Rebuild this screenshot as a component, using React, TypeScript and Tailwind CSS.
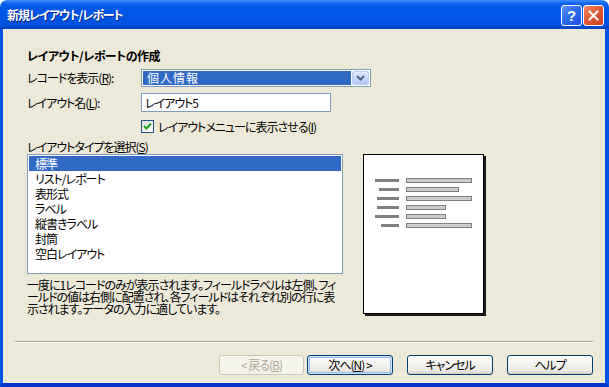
import React from "react";

const U = ({ c }: { c: string }) => <span className="underline">{c}</span>;

function XpButton({
  children,
  disabled = false,
  def = false,
}: {
  children: React.ReactNode;
  disabled?: boolean;
  def?: boolean;
}) {
  if (disabled) {
    return (
      <div className="h-[20px] w-[85px] rounded-[3px] border border-[#c9c7ba] bg-[#f5f4ea] flex items-center justify-center text-[#aca899] text-[12px] leading-none">
        {children}
      </div>
    );
  }
  return (
    <div
      className={
        "h-[20px] w-[86px] rounded-[3px] border border-[#003c74] bg-[linear-gradient(to_bottom,#ffffff_0%,#f3f3ef_40%,#ecebe6_80%,#d6d0c5_100%)] flex items-center justify-center text-black text-[12px] leading-none " +
        (def ? "shadow-[inset_0_0_0_1px_#cee7ff,inset_0_0_0_2px_#98b8ea]" : "")
      }
    >
      {children}
    </div>
  );
}

export default function App() {
  const items = ["標準", "リスト/レポート", "表形式", "ラベル", "縦書きラベル", "封筒", "空白レイアウト"];
  const bars = [
    { dx: 12, dw: 24, lw: 66 },
    { dx: 16, dw: 20, lw: 53 },
    { dx: 14, dw: 22, lw: 66 },
    { dx: 14, dw: 22, lw: 40 },
    { dx: 12, dw: 24, lw: 40 },
    { dx: 18, dw: 18, lw: 66 },
  ];
  return (
    <div className="w-[609px] h-[387px] bg-white flex flex-col overflow-hidden [font-family:'Noto_Sans_CJK_JP','Noto_Sans',sans-serif] [font-feature-settings:'palt'] text-black">
      {/* title bar */}
      <div className="h-[29px] shrink-0 rounded-t-[7px] bg-[linear-gradient(to_bottom,#3d8ef9_0%,#1263f0_12%,#0058ea_25%,#0055e5_60%,#0051dd_85%,#0040c0_100%)] flex items-center pl-[7px] pr-[5px]">
        <span className="text-white font-bold text-[12px] leading-none tracking-[-1px] [text-shadow:1px_1px_0_#0a2a8a]">
          新規レイアウト/レポート
        </span>
        <div className="ml-auto flex gap-[1px] mt-[1px]">
          <div className="w-[21px] h-[21px] rounded-[3px] border border-white bg-[linear-gradient(135deg,#5a93ff_0%,#2c6df0_45%,#1c52dc_100%)] flex items-center justify-center text-white font-bold text-[15px] leading-none [font-family:'Liberation_Sans',sans-serif]">
            ?
          </div>
          <div className="w-[21px] h-[21px] rounded-[3px] border border-white bg-[linear-gradient(135deg,#f08a66_0%,#e35a35_45%,#c8401f_100%)] flex items-center justify-center">
            <svg width="11" height="11" viewBox="0 0 11 11">
              <path d="M1.5 1.5 L9.5 9.5 M9.5 1.5 L1.5 9.5" stroke="white" strokeWidth="2" strokeLinecap="square" />
            </svg>
          </div>
        </div>
      </div>
      {/* body */}
      <div className="flex-1 flex flex-col bg-[#ece9d8] border-l-[3px] border-r-[4px] border-b-[4px] border-l-[#0553e4] border-r-[#0553e4] border-b-[#0734cc] tracking-[-1px]">
        <div className="flex-1 flex flex-col pl-[24px] text-[12px]">
          <div className="mt-[20px] h-[14px] leading-[14px] font-bold tracking-[-0.5px]">レイアウト/レポートの作成</div>
          <div className="mt-[6px] h-[18px] flex items-center">
            <div className="w-[114px] leading-none">
              レコードを表示(<U c="R" />):
            </div>
            <div className="w-[230px] h-[18px] border border-[#7f9db9] bg-white flex items-center p-[1px]">
              <div className="flex-1 h-full bg-[#316ac5] text-white flex items-center pl-[4px] leading-none tracking-[1px]">個人情報</div>
              <div className="ml-[1px] w-[17px] h-full rounded-[2px] border border-[#b9cdf4] bg-[linear-gradient(to_bottom,#e1eafe_0%,#c4d6fc_60%,#b4c9f6_100%)] flex items-center justify-center">
                <svg width="9" height="6" viewBox="0 0 9 6">
                  <path d="M1 1 L4.5 4.5 L8 1" stroke="#4d6185" strokeWidth="2" fill="none" />
                </svg>
              </div>
            </div>
          </div>
          <div className="mt-[6px] h-[19px] flex items-center">
            <div className="w-[114px] leading-none">
              レイアウト名(<U c="L" />):
            </div>
            <div className="w-[190px] h-[19px] border border-[#7f9db9] bg-white flex items-center pl-[3px] leading-none">レイアウト5</div>
          </div>
          <div className="mt-[8px] h-[13px] flex items-center pl-[114px]">
            <div className="w-[13px] h-[13px] border border-[#1c5180] bg-[linear-gradient(135deg,#dcdcd7_0%,#f5f5f3_60%,#ffffff_100%)] flex items-center justify-center">
              <svg width="9" height="9" viewBox="0 0 9 9">
                <path d="M1 4 L3.5 6.5 L8 1.5" stroke="#21a121" strokeWidth="2" fill="none" />
              </svg>
            </div>
            <div className="ml-[4px] leading-none">
              レイアウトメニューに表示させる(<U c="I" />)
            </div>
          </div>
          <div className="mt-[7px] h-[14px] leading-[14px]">
            レイアウトタイプを選択(<U c="S" />)
          </div>
          <div className="flex">
            <div className="flex flex-col w-[316px]">
              <div className="h-[120px] border border-[#7f9db9] bg-white p-[1px]">
                {items.map((it, i) => (
                  <div
                    key={it}
                    className={
                      "h-[15px] flex items-center pl-[6px] leading-none " +
                      (i === 0 ? "bg-[#316ac5] text-white" : "")
                    }
                  >
                    {it}
                  </div>
                ))}
              </div>
              <div className="mt-[5px] leading-[12px] whitespace-nowrap">
                一度に1レコードのみが表示されます。フィールドラベルは左側、フィ
                <br />
                ールドの値は右側に配置され、各フィールドはそれぞれ別の行に表
                <br />
                示されます。データの入力に適しています。
              </div>
            </div>
            <div className="ml-[20px] w-[121px] h-[160px] border border-black bg-white shadow-[2px_2px_0_#1a1a1a]">
              <svg width="119" height="158" viewBox="1 1 119 158">
                {bars.map((b, i) => (
                  <g key={i}>
                    <rect x={b.dx} y={25 + i * 9} width={b.dw} height={3} fill="#808080" />
                    <rect x={43.5} y={24.5 + i * 9} width={b.lw - 1} height={4} fill="#cccccc" stroke="#808080" strokeWidth="1" />
                  </g>
                ))}
              </svg>
            </div>
          </div>
        </div>
        <div className="mx-[12px] h-[2px] border-t border-t-[#aca899] border-b border-b-white" />
        <div className="mt-[12px] mb-[8px] mr-[12px] flex justify-end text-[12px]">
          <XpButton disabled>
            &lt; 戻る(<U c="B" />)
          </XpButton>
          <div className="ml-[3px]">
            <XpButton def>
              次へ(<U c="N" />) &gt;
            </XpButton>
          </div>
          <div className="ml-[14px]">
            <XpButton>キャンセル</XpButton>
          </div>
          <div className="ml-[14px]">
            <XpButton>ヘルプ</XpButton>
          </div>
        </div>
      </div>
    </div>
  );
}
